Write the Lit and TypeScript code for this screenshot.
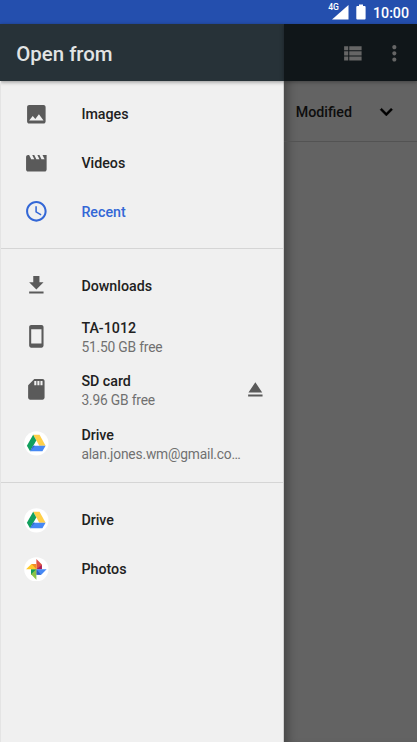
import { LitElement, html, css, svg, nothing } from "lit";
import { customElement } from "lit/decorators.js";

const glyphs: Record<string, unknown> = {
  image: svg`<path d="M21 19V5c0-1.1-.9-2-2-2H5c-1.1 0-2 .9-2 2v14c0 1.1.9 2 2 2h14c1.1 0 2-.9 2-2zM8.5 13.5l2.5 3.01L14.5 12l4.5 6H5l3.5-4.5z"/>`,
  movie: svg`<path d="M18 4l2 4h-3l-2-4h-2l2 4h-3l-2-4H8l2 4H7L5 4H4c-1.1 0-1.99.9-1.99 2L2 18c0 1.1.9 2 2 2h16c1.1 0 2-.9 2-2V4h-4z"/>`,
  clock: svg`<path d="M11.99 2C6.47 2 2 6.48 2 12s4.47 10 9.99 10C17.52 22 22 17.52 22 12S17.52 2 11.99 2zM12 20c-4.42 0-8-3.58-8-8s3.58-8 8-8 8 3.58 8 8-3.58 8-8 8zm.5-13H11v6l5.25 3.15.75-1.23-4.5-2.67z"/>`,
  download: svg`<path d="M19 9h-4V3H9v6H5l7 7 7-7zM5 18v2h14v-2H5z"/>`,
  phone: svg`<path d="M17 1.01L7 1c-1.1 0-1.99.9-1.99 2v18c0 1.1.89 2 1.99 2h10c1.1 0 2-.9 2-2V3c0-1.1-.9-1.99-2-1.99zM17 19H7V5h10v14z"/>`,
  sd: svg`<path d="M18 2h-8L4.02 8 4 20c0 1.1.9 2 2 2h12c1.1 0 2-.9 2-2V4c0-1.1-.9-2-2-2zm-6 6h-2V4h2v4zm3 0h-2V4h2v4zm3 0h-2V4h2v4z"/>`,
  eject: svg`<path d="M5 17h14v2H5zm7-12L5.33 15h13.34z"/>`,
  list: svg`<path d="M4 14h4v-4H4v4zm0 5h4v-4H4v4zM4 9h4V5H4v4zm5 5h12v-4H9v4zm0 5h12v-4H9v4zM9 5v4h12V5H9z"/>`,
  more: svg`<path d="M12 8c1.1 0 2-.9 2-2s-.9-2-2-2-2 .9-2 2 .9 2 2 2zm0 2c-1.1 0-2 .9-2 2s.9 2 2 2 2-.9 2-2-.9-2-2-2zm0 6c-1.1 0-2 .9-2 2s.9 2 2 2 2-.9 2-2-.9-2-2-2z"/>`,
  expand: svg`<path d="M16.59 8.09L12 12.67 7.41 8.09 6 9.5l6 6 6-6z" stroke="currentColor" stroke-width=".5"/>`,
  drive: svg`<circle cx="12" cy="12" r="11.8" fill="#fff"/>
    <path d="M8.9 3.6h6.2L21 14.4h-6.1z" fill="#ffcf48"/>
    <path d="M8.9 3.6l3.1 5.6-6.1 10.6L2.8 14.4z" fill="#11a05e"/>
    <path d="M8.9 14.4H21l-3.1 5.4h-12z" fill="#4688f4"/>
    <path d="M8.9 14.4l1.8 0-4.8 5.4z" fill="#3367c9"/>`,
  photos: svg`<circle cx="12" cy="12" r="11.8" fill="#fff"/>
    <path d="M12 2l5.4 5.2V12H12z" fill="#de5145"/>
    <path d="M12 12l5.4-4.2V12z" fill="#a71f5e"/>
    <path d="M22 12l-5.2 5.3H12V12z" fill="#4688f4"/>
    <path d="M12 12l4.6 5.3H12z" fill="#2f5ec4"/>
    <path d="M12 22l-5.2-5.3V12H12z" fill="#8bc34a"/>
    <path d="M12 12l-5.2 4.7V12z" fill="#0f9d58"/>
    <path d="M2 12l5.2-5.2H12V12z" fill="#ffc928"/>
    <path d="M12 12L7.4 6.8H12z" fill="#f28b2a"/>`,
};

const icon = (name: string) =>
  html`<svg class="icon" viewBox="0 0 24 24">${glyphs[name]}</svg>`;

interface Item {
  icon: string;
  label: string;
  detail?: string;
  active?: boolean;
  eject?: boolean;
}

const groups: Item[][] = [
  [
    { icon: "image", label: "Images" },
    { icon: "movie", label: "Videos" },
    { icon: "clock", label: "Recent", active: true },
  ],
  [
    { icon: "download", label: "Downloads" },
    { icon: "phone", label: "TA-1012", detail: "51.50 GB free" },
    { icon: "sd", label: "SD card", detail: "3.96 GB free", eject: true },
    { icon: "drive", label: "Drive", detail: "alan.jones.wm@gmail.co…" },
  ],
  [
    { icon: "drive", label: "Drive" },
    { icon: "photos", label: "Photos" },
  ],
];

@customElement("app-root")
export class AppRoot extends LitElement {
  static styles = css`
    :host {
      display: flex;
      flex-direction: column;
      height: 742px;
      overflow: hidden;
      font-family: Roboto, sans-serif;
      font-size: 14.25px;
      color: #212121;
    }
    * { box-sizing: border-box; }
    .icon {
      display: block;
      width: 24.7px;
      height: 24.7px;
      fill: currentColor;
      flex: none;
    }
    .status {
      flex: none;
      height: 24.4px;
      background: #244fae;
      color: #fff;
      display: flex;
      justify-content: flex-end;
      padding-right: 8px;
    }
    .signal { width: 21px; height: 24px; flex: none; }
    .net { font-size: 8.6px; font-weight: 500; fill: #fff; }
    .battery { width: 10px; height: 24px; margin-left: 7px; flex: none; }
    .time {
      width: 36px;
      margin-left: 7px;
      font-size: 14.2px;
      font-weight: 500;
      line-height: 27px;
      white-space: nowrap;
    }
    .body { flex: 1; min-height: 0; display: flex; }
    .drawer {
      width: 284px;
      flex: none;
      background: #f0f0f0;
      border-right: 1px solid #d0d0d0;
      display: flex;
      flex-direction: column;
    }
    .title {
      flex: none;
      height: 56.8px;
      margin-right: -1px;
      background: #273238;
      color: #e2e4e4;
      font-size: 20.4px;
      font-weight: 500;
      line-height: 60px;
      padding-left: 16.3px;
      box-shadow: 0 1px 4px rgba(0, 0, 0, 0.4);
    }
    .roots { flex: 1; border-left: 1px solid #e4e4e4; }
    .group { padding: 8.8px 0 11.8px; }
    .group + .group { border-top: 1px solid #d5d5d5; padding-top: 12.6px; }
    .item {
      display: flex;
      align-items: center;
      height: 48.7px;
      padding: 0 15px 0 23.1px;
      color: #5a5a5a;
    }
    .item.double { height: 53.45px; }
    .item.double > .icon, .eject .icon { margin-top: -1px; }
    .item.active { color: #3367d6; }
    .text { width: 164px; margin-left: 32.6px; }
    .label {
      color: #212121;
      font-weight: 500;
      line-height: 19px;
      padding-top: 1px;
    }
    .double .label { padding-top: 0.6px; }
    .active .label { color: #3367d6; }
    .detail {
      color: #707070;
      font-size: 13.8px;
      letter-spacing: -0.18px;
      line-height: 18px;
      white-space: nowrap;
    }
    .eject { margin-left: auto; }
    .content {
      flex: 1;
      background: #636363;
      box-shadow: inset 10px 0 10px -6px rgba(0, 0, 0, 0.3);
    }
    .toolbar {
      height: 56.8px;
      background: #101619;
      color: #666;
      display: flex;
      align-items: center;
      justify-content: flex-end;
      gap: 17.3px;
      padding: 1px 10px 0 0;
      box-shadow: 0 1px 4px rgba(0, 0, 0, 0.35);
    }
    .sort {
      height: 60.5px;
      border-bottom: 1px solid #535353;
      display: flex;
      align-items: center;
      justify-content: space-between;
      padding: 2.5px 18px 0 11.8px;
      color: #0d0d0d;
      font-weight: 500;
    }
    .sort .icon { color: #000; }
  `;

  private renderItem(item: Item) {
    return html`<div
      class="item ${item.detail ? "double" : ""} ${item.active ? "active" : ""}"
    >
      ${icon(item.icon)}
      <div class="text">
        <div class="label">${item.label}</div>
        ${item.detail ? html`<div class="detail">${item.detail}</div>` : nothing}
      </div>
      ${item.eject ? html`<div class="eject">${icon("eject")}</div>` : nothing}
    </div>`;
  }

  render() {
    return html`
      <div class="status">
        <svg class="signal" viewBox="0 0 21 24">
          <path d="M20.5 5v14.5H4z" fill="#fff" />
          <path d="M0 0h12v11H0z" fill="#244fae" />
          <text class="net" x="0.2" y="10">4G</text>
        </svg>
        <svg class="battery" viewBox="0 0 10 24">
          <path d="M3 4.6h4V6h1.6q1 0 1 1v11.4q0 1-1 1H1.3q-1 0-1-1V7q0-1 1-1H3z" fill="#fff" />
        </svg>
        <div class="time">10:00</div>
      </div>
      <div class="body">
        <div class="drawer">
          <div class="title">Open from</div>
          <div class="roots">
            ${groups.map(
              (g) => html`<div class="group">${g.map((i) => this.renderItem(i))}</div>`
            )}
          </div>
        </div>
        <div class="content">
          <div class="toolbar">${icon("list")}${icon("more")}</div>
          <div class="sort"><span>Modified</span>${icon("expand")}</div>
        </div>
      </div>
    `;
  }
}
